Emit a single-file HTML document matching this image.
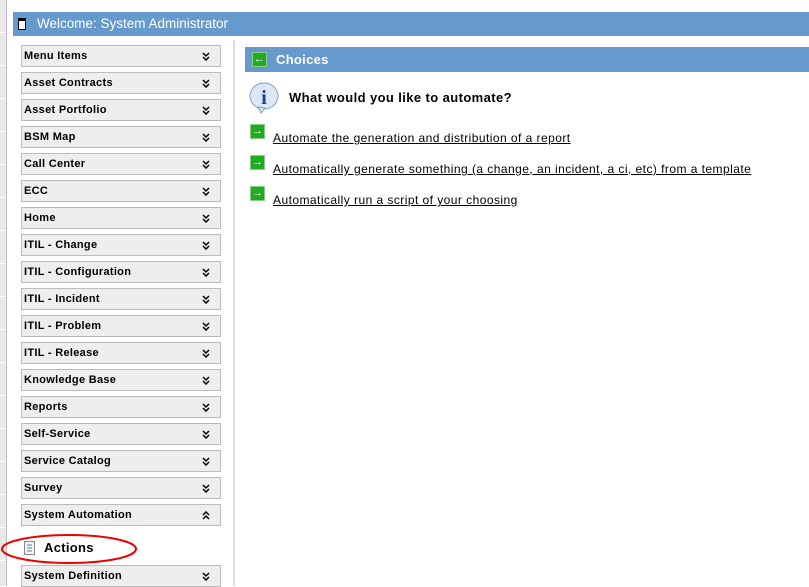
<!DOCTYPE html>
<html><head><style>
body{margin:0;width:809px;height:586px;overflow:hidden;background:#fff;font-family:"Liberation Sans",Arial,sans-serif;position:relative}
.lstrip{position:absolute;left:0;top:0;width:6px;height:586px;background:repeating-linear-gradient(180deg,#e8e8e8 0 32px,#fff 32px 33px);border-right:1px solid #bbb}
.hdr{position:absolute;left:13px;top:12px;width:796px;height:24px;background:#6699cc;color:#fff;font-size:13.5px;line-height:24px}
.hdr span{position:absolute;left:24px}
.hdr i{position:absolute;left:5px;top:6px;width:6px;height:8px;border:1px solid #000;background:#fff;border-top-width:3px}
.item{position:absolute;left:21px;width:198px;height:20px;background:#eee;border:1px solid #bbb;font-size:11px;font-weight:bold;line-height:21px;color:#000;letter-spacing:0.3px}
.item b{position:absolute;left:2px}
.item svg{position:absolute;right:10px;top:6px}
.sep{position:absolute;left:233px;top:40px;width:2px;height:546px;background:#ddd}
.ch{position:absolute;left:245px;top:47px;width:564px;height:25px;background:#6699cc;color:#fff;font-size:13px;font-weight:bold;line-height:26px;letter-spacing:0.3px}
.gb{position:absolute;width:13px;height:13px;background:#2a2;border:1px solid #8c8;color:#fff;font-size:11px;line-height:13px;text-align:center;font-weight:bold}
a{position:absolute;left:273px;font-size:12px;color:#000;text-decoration:underline;letter-spacing:0.45px}
</style></head><body>
<svg width="0" height="0" style="position:absolute"><defs>
<symbol id="dn" viewBox="0 0 8 9"><path d="M1 1L4 4L7 1M1 5L4 8L7 5" fill="none" stroke="#000" stroke-width="1.5"/></symbol>
<symbol id="up" viewBox="0 0 8 9"><path d="M1 4L4 1L7 4M1 8L4 5L7 8" fill="none" stroke="#000" stroke-width="1.5"/></symbol>
</defs></svg>
<div class="lstrip"></div>
<div class="hdr"><i></i><span>Welcome: System Administrator</span></div>
<div class="sep"></div>
<div class="item" style="top:45px"><b>Menu Items</b><svg width="8" height="9"><use href="#dn"/></svg></div>
<div class="item" style="top:72px"><b>Asset Contracts</b><svg width="8" height="9"><use href="#dn"/></svg></div>
<div class="item" style="top:99px"><b>Asset Portfolio</b><svg width="8" height="9"><use href="#dn"/></svg></div>
<div class="item" style="top:126px"><b>BSM Map</b><svg width="8" height="9"><use href="#dn"/></svg></div>
<div class="item" style="top:153px"><b>Call Center</b><svg width="8" height="9"><use href="#dn"/></svg></div>
<div class="item" style="top:180px"><b>ECC</b><svg width="8" height="9"><use href="#dn"/></svg></div>
<div class="item" style="top:207px"><b>Home</b><svg width="8" height="9"><use href="#dn"/></svg></div>
<div class="item" style="top:234px"><b>ITIL - Change</b><svg width="8" height="9"><use href="#dn"/></svg></div>
<div class="item" style="top:261px"><b>ITIL - Configuration</b><svg width="8" height="9"><use href="#dn"/></svg></div>
<div class="item" style="top:288px"><b>ITIL - Incident</b><svg width="8" height="9"><use href="#dn"/></svg></div>
<div class="item" style="top:315px"><b>ITIL - Problem</b><svg width="8" height="9"><use href="#dn"/></svg></div>
<div class="item" style="top:342px"><b>ITIL - Release</b><svg width="8" height="9"><use href="#dn"/></svg></div>
<div class="item" style="top:369px"><b>Knowledge Base</b><svg width="8" height="9"><use href="#dn"/></svg></div>
<div class="item" style="top:396px"><b>Reports</b><svg width="8" height="9"><use href="#dn"/></svg></div>
<div class="item" style="top:423px"><b>Self-Service</b><svg width="8" height="9"><use href="#dn"/></svg></div>
<div class="item" style="top:450px"><b>Service Catalog</b><svg width="8" height="9"><use href="#dn"/></svg></div>
<div class="item" style="top:477px"><b>Survey</b><svg width="8" height="9"><use href="#dn"/></svg></div>
<div class="item" style="top:504px"><b>System Automation</b><svg width="8" height="9"><use href="#up"/></svg></div>
<svg style="position:absolute;left:24px;top:541px" width="12" height="14"><rect x="0.5" y="0.5" width="10" height="13" fill="#f4f4f4" stroke="#888"/><path d="M3 4H8M3 7H8M3 10H8" stroke="#4a8a9a"/></svg>
<div style="position:absolute;left:44px;top:540px;font-size:13px;font-weight:bold;letter-spacing:0.3px">Actions</div>
<svg style="position:absolute;left:0;top:532px" width="140" height="34"><ellipse cx="69" cy="17" rx="67" ry="14" fill="none" stroke="#e00" stroke-width="2"/></svg>
<div class="item" style="top:565px"><b>System Definition</b><svg width="8" height="9"><use href="#dn"/></svg></div>
<div class="ch"><div class="gb" style="left:7px;top:5px">←</div><span style="position:absolute;left:31px">Choices</span></div>
<svg style="position:absolute;left:248px;top:81px" width="34" height="34"><ellipse cx="16" cy="15" rx="14" ry="13" fill="#dde8f6" stroke="#7a9cc8"/><path d="M10 26 L13 32 L17 27Z" fill="#dde8f6" stroke="#7a9cc8"/><text x="16" y="23" text-anchor="middle" font-family="Liberation Serif" font-weight="bold" font-size="20" fill="#1a3d8f">i</text></svg>
<div style="position:absolute;left:289px;top:90px;font-size:13px;font-weight:bold;letter-spacing:0.4px">What would you like to automate?</div>
<div class="gb" style="left:250px;top:124px">→</div><a style="top:131px">Automate the generation and distribution of a report</a>
<div class="gb" style="left:250px;top:155px">→</div><a style="top:162px">Automatically generate something (a change, an incident, a ci, etc) from a template</a>
<div class="gb" style="left:250px;top:186px">→</div><a style="top:193px">Automatically run a script of your choosing</a>
</body></html>
